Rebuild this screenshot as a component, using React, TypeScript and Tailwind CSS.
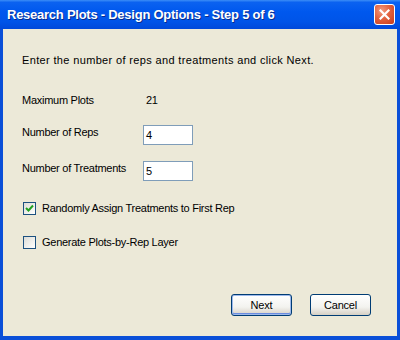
import React from 'react';

function CloseButton() {
  return (
    <div className="w-[21px] h-[21px] rounded-[3px] border border-white bg-[radial-gradient(circle_at_35%_30%,#F29B80_0%,#E2623F_45%,#C63B1C_100%)] flex items-center justify-center">
      <svg width="11" height="11" viewBox="0 0 11 11">
        <path d="M1.5 1.5 L9.5 9.5 M9.5 1.5 L1.5 9.5" stroke="#fff" strokeWidth="2.2" strokeLinecap="square" />
      </svg>
    </div>
  );
}

function TextBox({ value }: { value: string }) {
  return (
    <div className="w-[50px] h-[20px] bg-white border border-[#7F9DB9] pl-[2px] flex items-center text-[11px] leading-[13px] text-black">
      {value}
    </div>
  );
}

function CheckBox({ checked, label }: { checked?: boolean; label: string }) {
  return (
    <div className="flex items-center h-[13px]">
      <div className="w-[13px] h-[13px] border border-[#1C5180] bg-[linear-gradient(135deg,#DCDCD7_0%,#F5F5F2_70%,#FFFFFF_100%)] flex items-center justify-center">
        {checked && (
          <svg width="9" height="9" viewBox="0 0 9 9">
            <path d="M1 4 L3.5 6.5 L8 1.5" stroke="#21A121" strokeWidth="2" fill="none" />
          </svg>
        )}
      </div>
      <span className="ml-[6px] text-[11px] leading-[13px] tracking-[-0.27px] text-black">{label}</span>
    </div>
  );
}

function XpButton({ children, isDefault }: { children: React.ReactNode; isDefault?: boolean }) {
  return (
    <div
      className={
        isDefault
          ? 'w-[61px] h-[22px] rounded-[3px] border border-[#003C74] bg-[linear-gradient(to_bottom,#FFFFFF_0%,#F3F3EF_60%,#D6D0C5_100%)] shadow-[inset_0_0_0_1px_#9DB9EB,inset_0_-1px_0_1px_#6B8CE0] flex items-center justify-center text-[11px] tracking-[-0.2px] text-black'
          : 'w-[61px] h-[22px] rounded-[3px] border border-[#003C74] bg-[linear-gradient(to_bottom,#FFFFFF_0%,#F3F3EF_60%,#D6D0C5_100%)] flex items-center justify-center text-[11px] tracking-[-0.2px] text-black'
      }
    >
      {children}
    </div>
  );
}

export default function App() {
  return (
    <div className="w-[400px] h-[340px] flex flex-col bg-[#0A4FD8] font-['Liberation_Sans',Arial,sans-serif]">
      {/* Title bar */}
      <div className="h-[29px] shrink-0 flex items-center justify-between pl-[7px] pr-[5px] bg-[linear-gradient(to_bottom,#3C8EF7_0%,#0B62F0_8%,#0058EE_40%,#0054E8_75%,#0049DA_100%)]">
        <span className="text-white font-bold text-[13px] tracking-[-0.25px] [text-shadow:1px_1px_0_#0A2C8C]">
          Research Plots - Design Options - Step 5 of 6
        </span>
        <CloseButton />
      </div>

      {/* Body */}
      <div className="flex-1 mx-[3px] mb-[4px] bg-[#ECE9D8] pl-[19px] pt-[24px] flex flex-col text-black">
        <div className="h-[14px] text-[11px] leading-[14px] tracking-[0.35px]">
          Enter the number of reps and treatments and click Next.
        </div>

        <div className="mt-[26px] h-[14px] flex items-center text-[11px] tracking-[-0.27px]">
          <span className="w-[124px]">Maximum Plots</span>
          <span>21</span>
        </div>

        <div className="mt-[18px] flex items-start text-[11px]">
          <span className="w-[121px] leading-[13px] pt-[1px] tracking-[-0.27px]">Number of Reps</span>
          <TextBox value="4" />
        </div>

        <div className="mt-[16px] flex items-start text-[11px]">
          <span className="w-[121px] leading-[13px] pt-[1px] tracking-[-0.27px]">Number of Treatments</span>
          <TextBox value="5" />
        </div>

        <div className="mt-[21px] pl-[1px]">
          <CheckBox checked label="Randomly Assign Treatments to First Rep" />
        </div>

        <div className="mt-[21px] pl-[1px]">
          <CheckBox label="Generate Plots-by-Rep Layer" />
        </div>

        <div className="mt-[45px] flex gap-[18px] pl-[209px]">
          <XpButton isDefault>Next</XpButton>
          <XpButton>Cancel</XpButton>
        </div>
      </div>
    </div>
  );
}
